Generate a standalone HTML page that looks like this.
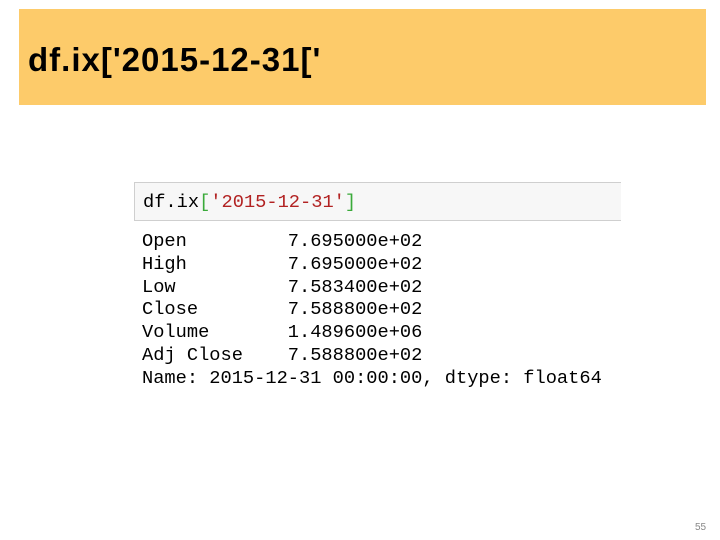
<!DOCTYPE html>
<html><head><style>
body{margin:0;width:720px;height:540px;background:#fff;position:relative;overflow:hidden}
.hd{position:absolute;left:19px;top:9px;width:687px;height:96px;background:#fdcb6a}
.hd span{position:absolute;left:9px;top:32px;font:bold 33px "Liberation Sans",sans-serif;color:#000;letter-spacing:1px}
.code{position:absolute;left:134px;top:182px;width:486px;height:37px;background:#f7f7f7;border:1px solid #cfcfcf;border-right:none}
pre{margin:0;font-family:"Liberation Mono",monospace;font-size:18.7px;color:#000}
.code pre{position:absolute;left:8px;top:8px;line-height:22px}
.out{position:absolute;left:142px;top:230px;line-height:22.8px}
.g{color:#3aaa3a}.r{color:#b22222}
.pn{position:absolute;left:695px;top:522px;font:10px "Liberation Sans",sans-serif;color:#888}
</style></head><body>
<div class="hd"><span>df.ix['2015-12-31['</span></div>
<div class="code"><pre>df.ix<span class="g">[</span><span class="r">'2015-12-31'</span><span class="g">]</span></pre></div>
<pre class="out">Open         7.695000e+02
High         7.695000e+02
Low          7.583400e+02
Close        7.588800e+02
Volume       1.489600e+06
Adj Close    7.588800e+02
Name: 2015-12-31 00:00:00, dtype: float64</pre>
<div class="pn">55</div>
</body></html>
